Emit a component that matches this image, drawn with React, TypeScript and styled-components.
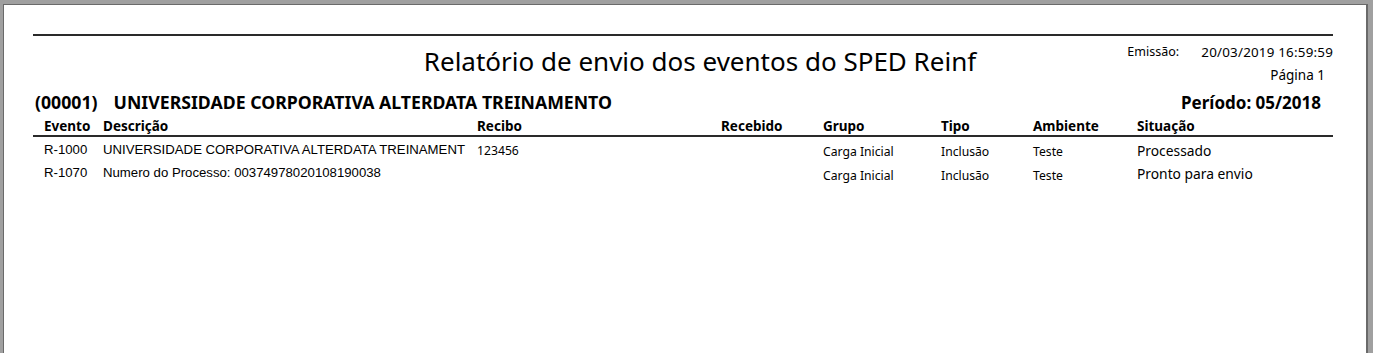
import styled, { createGlobalStyle } from "styled-components"

const GlobalStyle = createGlobalStyle`
  html, body {
    margin: 0;
    padding: 0;
    background: #a0a0a0;
    overflow: hidden;
  }
`

const columns = [
  { key: "evento", label: "Evento", width: 70 },
  { key: "descricao", label: "Descrição", width: 374 },
  { key: "recibo", label: "Recibo", width: 244 },
  { key: "recebido", label: "Recebido", width: 102 },
  { key: "grupo", label: "Grupo", width: 118 },
  { key: "tipo", label: "Tipo", width: 92 },
  { key: "ambiente", label: "Ambiente", width: 104 },
  { key: "situacao", label: "Situação", width: 196 },
]

const gridTemplate = columns.map((c) => `${c.width}px`).join(" ")

const rows = [
  {
    evento: "R-1000",
    descricao: "UNIVERSIDADE CORPORATIVA ALTERDATA TREINAMENT",
    recibo: "123456",
    grupo: "Carga Inicial",
    tipo: "Inclusão",
    ambiente: "Teste",
    situacao: "Processado",
  },
  {
    evento: "R-1070",
    descricao: "Numero do Processo: 00374978020108190038",
    recibo: "",
    grupo: "Carga Inicial",
    tipo: "Inclusão",
    ambiente: "Teste",
    situacao: "Pronto para envio",
  },
]

function App() {
  return (
    <>
      <GlobalStyle />
      <Viewer>
        <Page>
          <TopRule />
          <ReportHeader>
            <Title>Relatório de envio dos eventos do SPED Reinf</Title>
            <Meta>
              <MetaLine>
                <MetaLabel>Emissão:</MetaLabel>
                <MetaValue>20/03/2019 16:59:59</MetaValue>
              </MetaLine>
              <PageNumber>Página 1</PageNumber>
            </Meta>
          </ReportHeader>

          <CompanyBar>
            <Company>
              <span>(00001)</span>
              <span>UNIVERSIDADE CORPORATIVA ALTERDATA TREINAMENTO</span>
            </Company>
            <Period>Período:&nbsp;05/2018</Period>
          </CompanyBar>

          <HeadRow>
            {columns.map((c) => (
              <HeadCell key={c.key} $first={c.key === "evento"}>
                {c.label}
              </HeadCell>
            ))}
          </HeadRow>

          {rows.map((r, i) => (
            <DataRow key={r.evento}>
              <ArialCell $first>{r.evento}</ArialCell>
              <ArialCell>{r.descricao}</ArialCell>
              <Cell $shift={1}>{r.recibo}</Cell>
              <Cell />
              <Cell $shift={i === 0 ? 2 : 3}>{r.grupo}</Cell>
              <Cell $shift={i === 0 ? 2 : 3}>{r.tipo}</Cell>
              <Cell $shift={i === 0 ? 2 : 3}>{r.ambiente}</Cell>
              <StatusCell>{r.situacao}</StatusCell>
            </DataRow>
          ))}
        </Page>
      </Viewer>
    </>
  )
}

const Viewer = styled.div`
  height: 353px;
  padding: 4px 5px 0 3px;
  box-sizing: border-box;
`

const Page = styled.div`
  background: #fff;
  height: 400px;
  border-top: 1px solid #6a6a6a;
  border-left: 1px solid #6a6a6a;
  border-right: 2px solid #6a6a6a;
  padding: 29px 33px 0 29px;
  font-family: "Noto Sans", "Open Sans", sans-serif;
  color: #000;
`

const TopRule = styled.div`
  height: 2px;
  background: #2a2a2a;
  width: 1300px;
`

const ReportHeader = styled.div`
  display: grid;
  grid-template-columns: 1fr 206px;
  width: 1300px;
  height: 54px;
`

const Title = styled.div`
  font-size: 26px;
  line-height: 50px;
  text-align: center;
  padding-left: 240px;
`

const Meta = styled.div`
  font-size: 12.5px;
  padding-top: 7px;
  display: flex;
  flex-direction: column;
  align-items: flex-end;
  gap: 5px;
  white-space: nowrap;
`

const MetaLine = styled.div`
  display: flex;
`

const MetaLabel = styled.span`
  width: 74px;
  flex-shrink: 0;
`

const MetaValue = styled.span`
  font-size: 13.4px;
  letter-spacing: 0.2px;
`

const PageNumber = styled.div`
  padding-right: 8px;
  font-size: 13.5px;
`

const CompanyBar = styled.div`
  display: flex;
  justify-content: space-between;
  align-items: center;
  width: 1300px;
  height: 24px;
  font-weight: 700;
  font-size: 17.7px;
`

const Company = styled.div`
  display: flex;
  gap: 16px;
  padding-left: 2px;
`

const Period = styled.div`
  font-size: 17px;
  padding-right: 12px;
`

const HeadRow = styled.div`
  display: grid;
  grid-template-columns: ${gridTemplate};
  border-bottom: 2px solid #2a2a2a;
  height: 21px;
  align-items: end;
`

const HeadCell = styled.div<{ $first?: boolean }>`
  font-weight: 700;
  font-size: 13.5px;
  line-height: 17px;
  padding-left: ${({ $first }) => ($first ? "11px" : "0")};
`

const DataRow = styled.div`
  display: grid;
  grid-template-columns: ${gridTemplate};
  height: 23px;
  align-items: start;
  padding-top: 5px;
  box-sizing: border-box;
  &:first-of-type {
    padding-top: 6px;
  }
`

const ArialCell = styled.div<{ $first?: boolean }>`
  font-family: "Liberation Sans", Arial, sans-serif;
  font-size: 13.2px;
  line-height: 16px;
  white-space: nowrap;
  padding-left: ${({ $first }) => ($first ? "11px" : "0")};
`

const Cell = styled.div<{ $shift?: number }>`
  font-size: 12.2px;
  line-height: 16px;
  padding-top: ${({ $shift }) => $shift ?? 0}px;
  white-space: nowrap;
`

const StatusCell = styled.div`
  font-size: 13.8px;
  line-height: 18px;
  white-space: nowrap;
`

export default App
